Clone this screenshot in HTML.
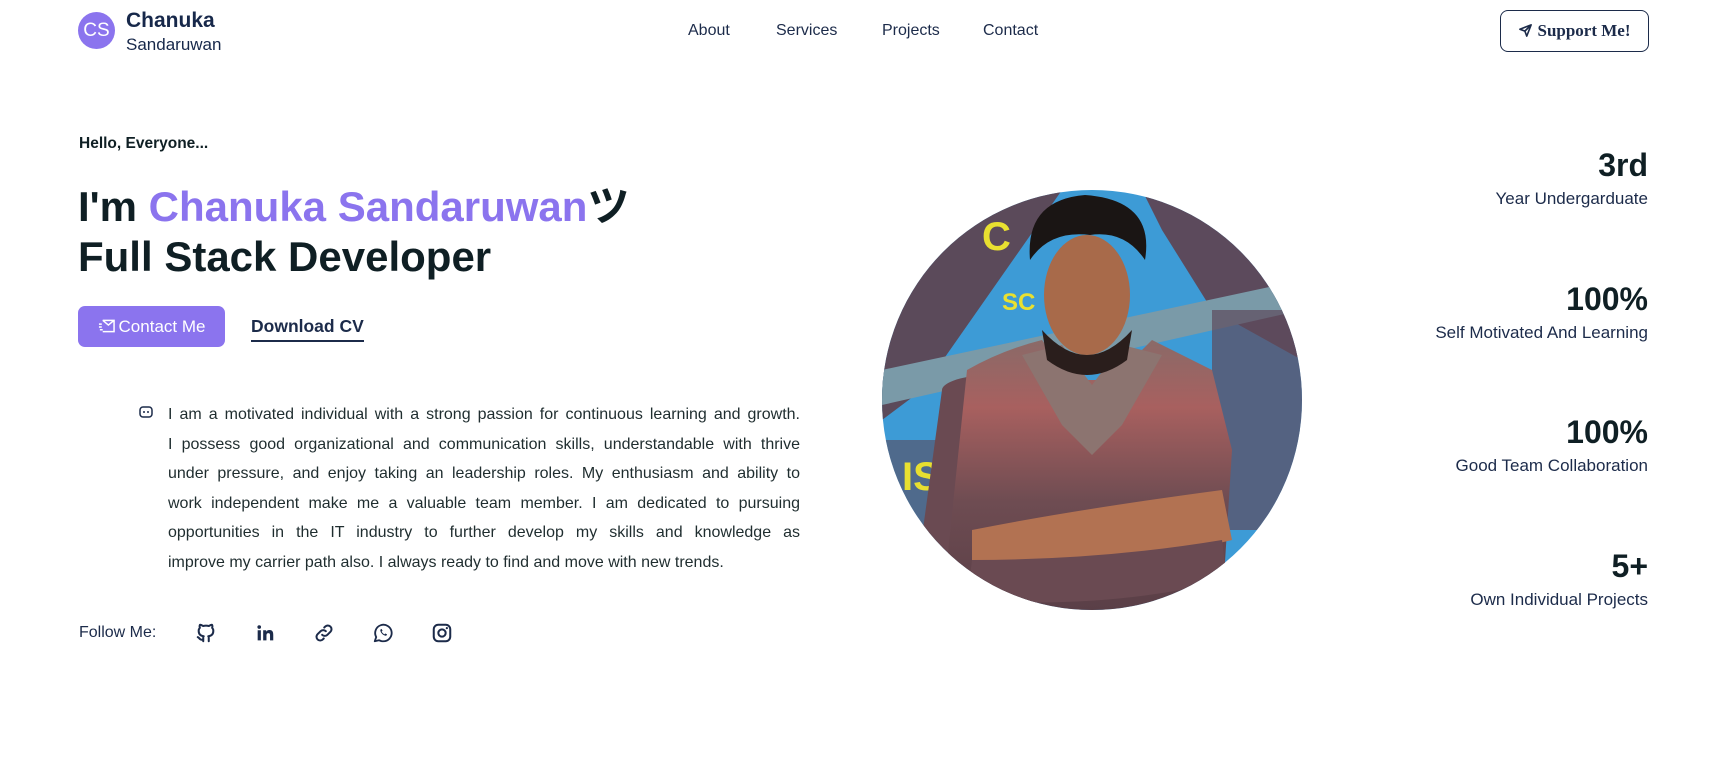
<!DOCTYPE html>
<html><head><meta charset="utf-8"><style>
*{margin:0;padding:0;box-sizing:border-box}
body{width:1731px;height:770px;background:#fff;font-family:"Liberation Sans",sans-serif;color:#1c2b4a;position:relative;overflow:hidden}
.a{position:absolute;white-space:nowrap}
.nav a{position:absolute;top:22px;font-size:16px;color:#1c2b4a;text-decoration:none}
.stat{position:absolute;right:83px;text-align:right}
.stat b{display:block;font-size:32px;color:#0f1f24;font-weight:700;line-height:38px}
.stat span{display:block;font-size:17px;color:#1c2b4a;margin-top:5px}
.p{position:absolute;left:168px;top:400px;width:632px;font-size:16px;line-height:29.5px;color:#1f2d2f}
.p div{text-align:justify;text-align-last:justify;white-space:nowrap}
.p div.l{text-align-last:left}
.ic{position:absolute;top:622px;width:22px;height:22px}
</style></head><body>
<div class="a" style="left:78px;top:12px;width:37px;height:37px;border-radius:50%;background:#8b74ee;color:#fff;font-size:19px;text-align:center;line-height:37px">CS</div>
<div class="a" style="left:126px;top:9px;font-size:21px;font-weight:700;color:#17284a">Chanuka</div>
<div class="a" style="left:126px;top:35px;font-size:17px;color:#17284a">Sandaruwan</div>
<div class="nav"><a style="left:688px">About</a><a style="left:776px">Services</a><a style="left:882px">Projects</a><a style="left:983px">Contact</a></div>
<div class="a" style="left:1500px;top:10px;width:149px;height:42px;border:1.5px solid #1c2b4a;border-radius:8px;font-family:'Liberation Serif',serif;font-weight:700;font-size:17px;line-height:39px;text-align:center;color:#1c2b4a">
<svg width="15" height="15" viewBox="0 0 24 24" style="vertical-align:-2px;margin-right:4px"><path d="M21 3L3 10l8 3 3 8z M21 3l-10 10" fill="none" stroke="#1c2b4a" stroke-width="2.6" stroke-linejoin="round"/></svg>Support Me!</div>

<div class="a" style="left:79px;top:135px;font-size:15.5px;font-weight:700;color:#0f1f24">Hello, Everyone...</div>
<div class="a" style="left:78px;top:179px;font-size:42px;font-weight:700;color:#0f1f24;line-height:50px">I'm <span style="color:#8b74ee">Chanuka Sandaruwan</span><span style="font-family:'Noto Sans CJK JP',sans-serif;font-weight:700">ツ</span><br>Full Stack Developer</div>
<div class="a" style="left:78px;top:306px;width:147px;height:41px;border-radius:7px;background:#8b74ee;color:#fff;font-size:17px;line-height:41px;text-align:center">
<svg width="17" height="14" viewBox="0 0 18 14" style="vertical-align:-1px;margin-right:4px"><path d="M5 1h12v12H5M5 1l6 5 6-5M1 5h3M1 8h3M2 11h3" fill="none" stroke="#fff" stroke-width="1.6"/></svg>Contact Me</div>
<div class="a" style="left:251px;top:316px;font-size:17.5px;font-weight:700;color:#1c2b4a;padding-bottom:3px;border-bottom:2px solid #1c2b4a">Download CV</div>

<svg class="a" style="left:139px;top:405px" width="14" height="14" viewBox="0 0 14 14"><rect x="1" y="2" width="12" height="10" rx="3" fill="none" stroke="#1c2b4a" stroke-width="1.5"/><circle cx="5" cy="7" r="1" fill="#1c2b4a"/><circle cx="9" cy="7" r="1" fill="#1c2b4a"/></svg>
<div class="p">
<div>I am a motivated individual with a strong passion for continuous learning and growth.</div>
<div>I possess good organizational and communication skills, understandable with thrive</div>
<div>under pressure, and enjoy taking an leadership roles. My enthusiasm and ability to</div>
<div>work independent make me a valuable team member. I am dedicated to pursuing</div>
<div>opportunities in the IT industry to further develop my skills and knowledge as</div>
<div class="l">improve my carrier path also. I always ready to find and move with new trends.</div>
</div>

<div class="a" style="left:79px;top:624px;font-size:16px;color:#1c2b4a">Follow Me:</div>
<svg class="ic" style="left:195px" viewBox="0 0 24 24"><path d="M9 19c-4 1.5-4-2-6-2.5M15 21v-3.5c0-1 .1-1.4-.5-2 2.8-.3 5.5-1.4 5.5-6a4.6 4.6 0 00-1.3-3.2 4.2 4.2 0 00-.1-3.2s-1.1-.3-3.5 1.3a12 12 0 00-6.2 0C6.5 2.8 5.4 3.1 5.4 3.1a4.2 4.2 0 00-.1 3.2A4.6 4.6 0 004 9.5c0 4.6 2.7 5.7 5.5 6-.6.6-.6 1.2-.5 2V21" fill="none" stroke="#1c2b4a" stroke-width="2.2" stroke-linecap="round" stroke-linejoin="round"/></svg>
<svg class="ic" style="left:254px" viewBox="0 0 24 24"><path d="M4 9h3.5v11H4zM5.7 3.5a2 2 0 110 4 2 2 0 010-4zM10 9h3.3v1.6c.5-.9 1.7-1.9 3.5-1.9 3.7 0 4.2 2.4 4.2 5.5V20h-3.5v-5c0-1.3 0-2.9-1.8-2.9s-2.1 1.4-2.1 2.8V20H10z" fill="#1c2b4a"/></svg>
<svg class="ic" style="left:313px" viewBox="0 0 24 24"><path d="M10 14a4 4 0 005.7 0l3.3-3.3a4 4 0 00-5.7-5.7l-1 1M14 10a4 4 0 00-5.7 0L5 13.3a4 4 0 005.7 5.7l1-1" fill="none" stroke="#1c2b4a" stroke-width="2.2" stroke-linecap="round"/></svg>
<svg class="ic" style="left:372px" viewBox="0 0 24 24"><path d="M3 21l1.6-4.6A9 9 0 1112 21a9 9 0 01-4.4-1.1z" fill="none" stroke="#1c2b4a" stroke-width="2" stroke-linejoin="round"/><path d="M9 8.5c0 3 3 6.5 6.5 6.5l1-1.5-2-1-1 1c-1-.5-2.5-2-3-3l1-1-1-2z" fill="#1c2b4a"/></svg>
<svg class="ic" style="left:431px" viewBox="0 0 24 24"><rect x="3" y="3" width="18" height="18" rx="5" fill="none" stroke="#1c2b4a" stroke-width="2.2"/><circle cx="12" cy="12" r="4" fill="none" stroke="#1c2b4a" stroke-width="2.2"/><circle cx="17.3" cy="6.7" r="1.2" fill="#1c2b4a"/></svg>

<svg class="a" style="left:882px;top:190px" width="420" height="420" viewBox="0 0 420 420">
<defs><clipPath id="c"><circle cx="210" cy="210" r="210"/></clipPath>
<linearGradient id="sh" x1="0" y1="0" x2="0" y2="1"><stop offset="0" stop-color="#8a6a68"/><stop offset=".25" stop-color="#a8605f"/><stop offset=".6" stop-color="#6e4c52"/><stop offset="1" stop-color="#5a3f47"/></linearGradient></defs>
<g clip-path="url(#c)">
<rect width="420" height="420" fill="#3d9bd6"/>
<path d="M0 60L120 0h60L40 200 0 230z" fill="#5b4a5a"/>
<path d="M260 0h160v170L330 120 280 40z" fill="#5c4a5c"/>
<path d="M0 180L420 90v30L0 215z" fill="#7a9aa8"/>
<path d="M330 120h90v220h-90z" fill="#5e4a5c" opacity=".7"/>
<path d="M0 250h70v100H0z" fill="#5b4a5a" opacity=".6"/>
<text x="100" y="60" font-size="40" font-weight="700" fill="#e8e030" font-family="Liberation Sans">C</text>
<text x="120" y="120" font-size="24" font-weight="700" fill="#e8e030" font-family="Liberation Sans">SC</text>
<text x="20" y="300" font-size="40" font-weight="700" fill="#e8e030" font-family="Liberation Sans">IS</text>
<path d="M60 200C60 190 100 180 120 190L140 230 150 420H30z" fill="#6a4a52"/>
<path d="M85 180Q120 160 160 150L190 190 230 190 270 150 330 180 350 260 340 420H60z" fill="url(#sh)"/>
<path d="M140 165l40 70 30 30 30-30 40-70-40-10-30 40-30-40z" fill="#8c7470"/>
<ellipse cx="205" cy="105" rx="43" ry="60" fill="#a86a4a"/>
<path d="M160 140q45 50 90 0l-5 30q-40 30-80 0z" fill="#2a1e1c"/>
<path d="M148 70q-5-60 55-65 70 5 60 65-20-30-55-25-40-5-60 25z" fill="#1a1514"/>
<path d="M90 340q100-20 250-40l10 50q-120 30-260 30z" fill="#b27252"/>
<path d="M90 370q130 0 250-20l5 40q-120 30-260 20z" fill="#6a4a52"/>
</g></svg>

<div class="stat" style="top:146px"><b>3rd</b><span>Year Undergarduate</span></div>
<div class="stat" style="top:280px"><b>100%</b><span>Self Motivated And Learning</span></div>
<div class="stat" style="top:413px"><b>100%</b><span>Good Team Collaboration</span></div>
<div class="stat" style="top:547px"><b>5+</b><span>Own Individual Projects</span></div>
</body></html>
